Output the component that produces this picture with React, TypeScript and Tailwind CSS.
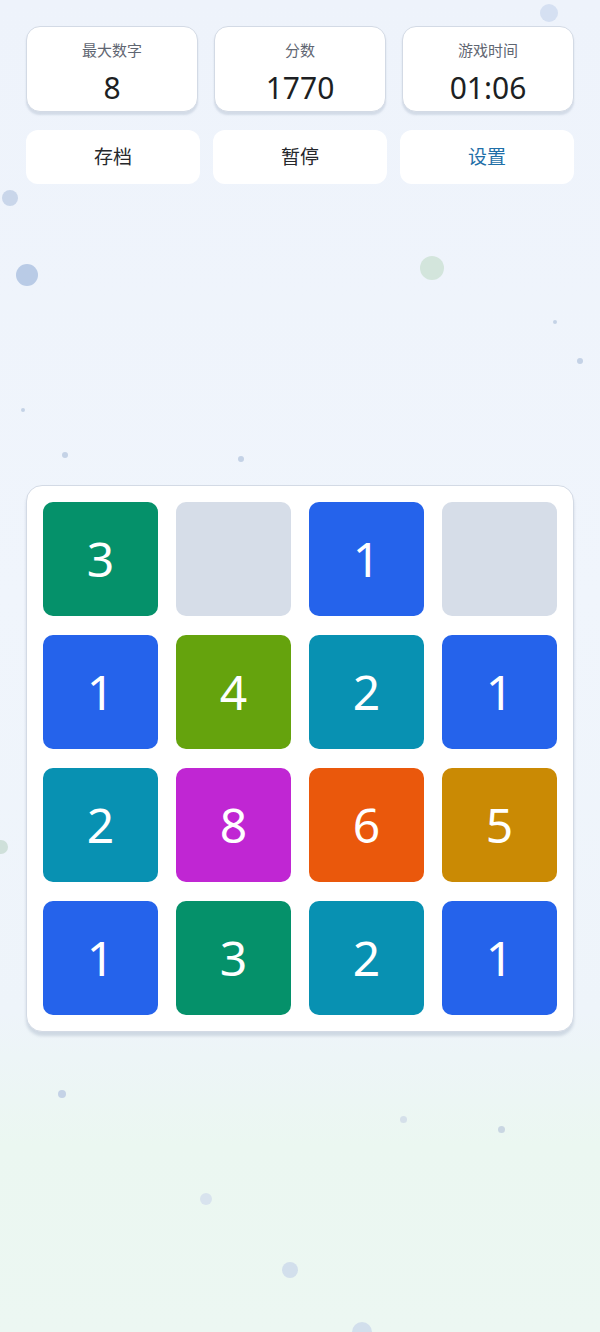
import React from "react";

const tiles: (number | null)[] = [3, null, 1, null, 1, 4, 2, 1, 2, 8, 6, 5, 1, 3, 2, 1];

const colorFor: Record<number, string> = {
  1: "bg-[#2563eb]",
  2: "bg-[#0891b2]",
  3: "bg-[#05916a]",
  4: "bg-[#65a30d]",
  5: "bg-[#ca8a04]",
  6: "bg-[#ea580c]",
  8: "bg-[#c026d3]",
};

function Stat({ label, value }: { label: string; value: string }) {
  return (
    <div className="flex h-[86px] flex-col items-center rounded-[14px] border border-[#d3dae5] bg-white pt-[16px] shadow-[0_3px_2px_rgba(160,175,195,0.35)]">
      <div className="text-[15px] leading-none text-[#5f6672]">{label}</div>
      <div className="mt-[15px] text-[30px] leading-none text-[#1d1f23]">{value}</div>
    </div>
  );
}

function Btn({ label, blue }: { label: string; blue?: boolean }) {
  return (
    <div
      className={`flex h-[54px] items-center justify-center rounded-[12px] bg-white text-[19px] ${
        blue ? "text-[#1f6fa8]" : "text-[#26282c]"
      }`}
    >
      {label}
    </div>
  );
}

const dots = [
  { l: 2, t: 190, s: 16, c: "bg-[#c9d6ea]" },
  { l: 16, t: 264, s: 22, c: "bg-[#b9cbe6]" },
  { l: 420, t: 256, s: 24, c: "bg-[#d3e5dc]" },
  { l: 540, t: 4, s: 18, c: "bg-[#d5e0f2]" },
  { l: 577, t: 358, s: 6, c: "bg-[#c4d2e6]" },
  { l: 62, t: 452, s: 6, c: "bg-[#c4d2e6]" },
  { l: 238, t: 456, s: 6, c: "bg-[#c4d2e6]" },
  { l: 21, t: 408, s: 4, c: "bg-[#c4d2e6]" },
  { l: 553, t: 320, s: 4, c: "bg-[#c4d2e6]" },
  { l: 58, t: 1090, s: 8, c: "bg-[#c4d2e6]" },
  { l: 400, t: 1116, s: 7, c: "bg-[#d5e0ea]" },
  { l: 498, t: 1126, s: 7, c: "bg-[#c9d6e2]" },
  { l: 200, t: 1193, s: 12, c: "bg-[#d8e3ee]" },
  { l: 282, t: 1262, s: 16, c: "bg-[#d2dfec]" },
  { l: 352, t: 1322, s: 20, c: "bg-[#d2dfec]" },
  { l: -6, t: 840, s: 14, c: "bg-[#cfe0da]" },
];

export default function App() {
  return (
    <div className="relative h-[1332px] w-[600px] overflow-hidden bg-[linear-gradient(180deg,#eef3fb_0%,#f0f5fc_45%,#eef4fa_76%,#ebf7f1_86%,#ecf7f2_100%)] font-['Noto_Sans','Noto_Sans_CJK_SC',sans-serif]">
      {dots.map((d, i) => (
        <div
          key={i}
          className={`absolute rounded-full ${d.c}`}
          style={{ left: d.l, top: d.t, width: d.s, height: d.s }}
        />
      ))}
      <div className="relative px-[26px] pt-[26px]">
        <div className="grid grid-cols-3 gap-[16px]">
          <Stat label="最大数字" value="8" />
          <Stat label="分数" value="1770" />
          <Stat label="游戏时间" value="01:06" />
        </div>
        <div className="mt-[18px] grid grid-cols-3 gap-[13px] px-0">
          <Btn label="存档" />
          <Btn label="暂停" />
          <Btn label="设置" blue />
        </div>
        <div className="mt-[301px] rounded-[16px] border border-[#d3dae5] bg-white p-[16px] shadow-[0_4px_3px_rgba(160,175,195,0.4)]">
          <div className="grid grid-cols-4 gap-x-[18px] gap-y-[19px]">
            {tiles.map((v, i) => (
              <div
                key={i}
                className={`flex h-[114px] items-center justify-center rounded-[10px] text-[48px] font-normal text-white ${
                  v === null ? "bg-[#d6dde8]" : colorFor[v]
                }`}
              >
                {v ?? ""}
              </div>
            ))}
          </div>
        </div>
      </div>
    </div>
  );
}
